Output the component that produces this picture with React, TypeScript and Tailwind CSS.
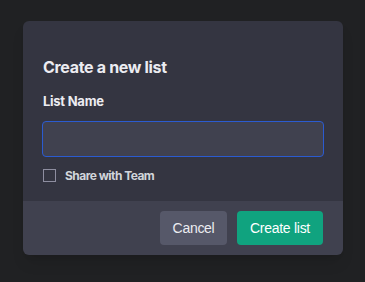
import React from "react";

export default function App() {
  return (
    <div
      className="w-[365px] h-[282px] bg-[#202123] pt-[21px] pl-[23px]"
      style={{ fontFamily: "Inter, 'Noto Sans', sans-serif" }}
    >
      <div className="w-[320px] h-[234px] rounded-[6px] overflow-hidden flex flex-col shadow-lg">
        <div className="bg-[#343541] flex-1 px-[20px] pt-[34px]">
          <h2 className="text-[16px] leading-[24px] font-bold tracking-[-0.02em] text-[#ececf1]">Create a new list</h2>
          <label className="block mt-[12px] text-[13px] leading-[20px] font-bold tracking-[-0.02em] text-[#ececf1]">List Name</label>
          <input
            className="mt-[10px] w-[282px] h-[36px] -ml-px rounded-[4px] border border-[#2b5bd0] bg-[#40414f] outline-none block"
          />
          <div className="mt-[12px] flex items-center gap-[9px]">
            <div className="w-[13px] h-[13px] border border-[#8e8ea0]" />
            <span className="text-[12px] leading-[13px] font-bold tracking-[-0.045em] text-[#d1d5db]">Share with Team</span>
          </div>
        </div>
        <div
          className="bg-[#40414f] h-[54px] flex items-center justify-end gap-[10px] pr-[20px]"
          style={{ fontFamily: "'Liberation Sans', Arial, sans-serif" }}
        >
          <button className="w-[67px] h-[34px] rounded-[4px] bg-[#565869] text-[14px] tracking-[-0.02em] text-[#ececf1]">Cancel</button>
          <button className="w-[86px] h-[34px] rounded-[4px] bg-[#10a37f] text-[14px] tracking-[-0.02em] text-white">Create list</button>
        </div>
      </div>
    </div>
  );
}
